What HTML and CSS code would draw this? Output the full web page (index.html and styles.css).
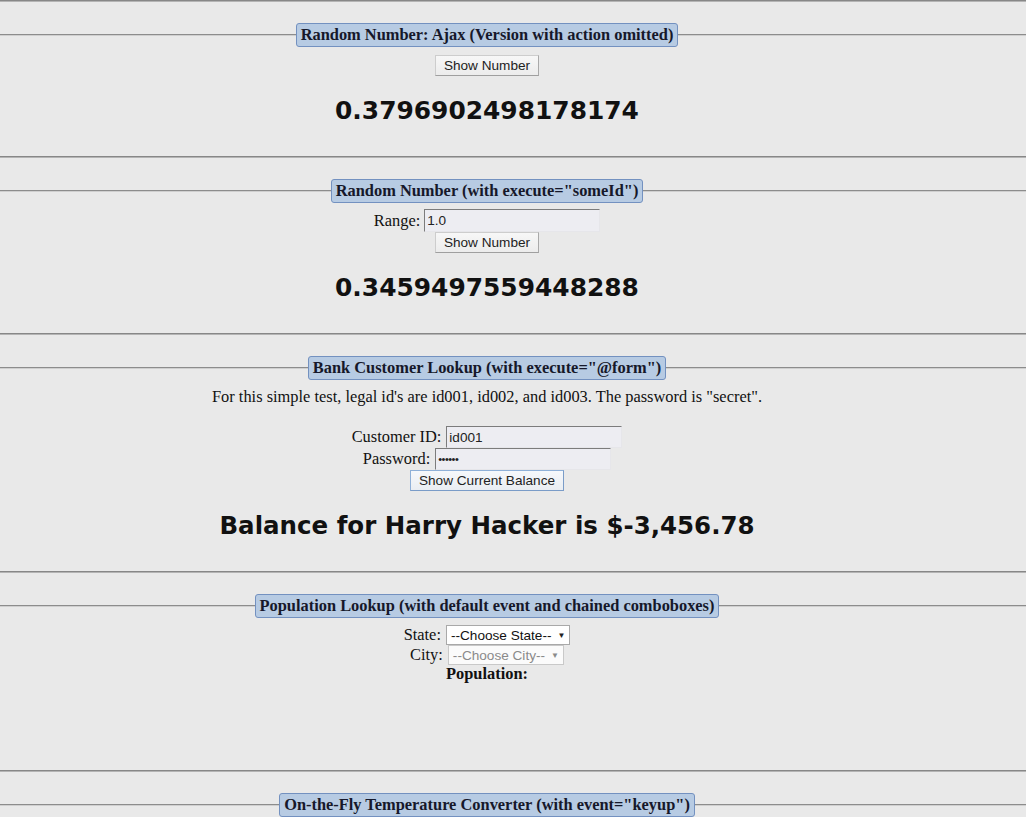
FILE: index.html
```html
<!DOCTYPE html>
<html>
<head>
<meta charset="utf-8">
<title>Ajax Examples</title>
<link rel="stylesheet" href="styles.css">
</head>
<body>
<div class="page">
  <hr class="sep first">
  <section class="block">
    <div class="legend-row"><span class="legend">Random Number: Ajax (Version with action omitted)</span></div>
    <div class="content">
      <button class="btn btn-top">Show Number</button>
      <h2 class="result">0.3796902498178174</h2>
    </div>
  </section>
  <hr class="sep">
  <section class="block">
    <div class="legend-row"><span class="legend">Random Number (with execute="someId")</span></div>
    <div class="content">
      <div class="row row-range"><span class="label">Range:</span><input class="text-input w176" type="text" value="1.0"></div>
      <button class="btn">Show Number</button>
      <h2 class="result">0.3459497559448288</h2>
    </div>
  </section>
  <hr class="sep">
  <section class="block">
    <div class="legend-row"><span class="legend">Bank Customer Lookup (with execute="@form")</span></div>
    <div class="content">
      <p class="note">For this simple test, legal id's are id001, id002, and id003. The password is "secret".</p>
      <div class="row row-cust"><span class="label">Customer ID:</span><input class="text-input w176" type="text" value="id001"></div>
      <div class="row row-pass"><span class="label">Password:</span><input class="text-input w176 pw" type="password" value="secret"></div>
      <button class="btn btn-focus">Show Current Balance</button>
      <h2 class="result balance">Balance for Harry Hacker is $-3,456.78</h2>
    </div>
  </section>
  <hr class="sep">
  <section class="block">
    <div class="legend-row"><span class="legend">Population Lookup (with default event and chained comboboxes)</span></div>
    <div class="content content-pop">
      <div class="row row-sel"><span class="label">State:</span><span class="combo"><span class="combo-text">--Choose State--</span><span class="arrow">▼</span></span></div>
      <div class="row row-sel"><span class="label">City:</span><span class="combo disabled"><span class="combo-text">--Choose City--</span><span class="arrow">▼</span></span></div>
      <div class="pop">Population: </div>
    </div>
  </section>
  <hr class="sep">
  <section class="block">
    <div class="legend-row"><span class="legend">On-the-Fly Temperature Converter (with event="keyup")</span></div>
  </section>
</div>
</body>
</html>
```

FILE: styles.css
```css
html {
  overflow-x: hidden;
}

body {
  margin: 0;
  background: #e9e9e9;
  font-family: "Liberation Serif", "Times New Roman", serif;
  font-size: 16.4px;
  color: #111;
  overflow-x: hidden;
}

.page {
  margin-left: -52px;
}

.sep {
  margin: 0;
  height: 0;
  border: 0;
  border-top: 1px solid #878787;
  border-bottom: 1px solid #b4b4b4;
}

.legend-row {
  display: flex;
  align-items: center;
  margin-top: 21px;
  height: 24px;
}

.legend-row::before,
.legend-row::after {
  content: "";
  flex: 1;
  border-top: 1px solid #8c8c8c;
  border-bottom: 1px solid #cfcfcf;
}

.legend {
  background: #b7cbe3;
  border: 1px solid #7391c0;
  border-radius: 3px;
  padding: 0 4px;
  font-weight: bold;
  font-size: 16.4px;
  line-height: 22px;
  color: #16182a;
  white-space: nowrap;
}

.content {
  display: flex;
  flex-direction: column;
  align-items: center;
}

.btn {
  font-family: "Liberation Sans", Arial, sans-serif;
  font-size: 13.6px;
  height: 21px;
  box-sizing: border-box;
  padding: 0 8px;
  background: linear-gradient(#f7f7f7, #ececec);
  border: 1px solid #cdcdcd;
  border-right-color: #a9a9a9;
  border-bottom-color: #9f9f9f;
  color: #222;
  margin: 0;
}

.btn-top {
  margin-top: 8px;
}

.btn-focus {
  border-color: #8fb0d8;
  border-right-color: #7a9cc8;
  border-bottom-color: #7a9cc8;
  background: linear-gradient(#f6f8fb, #e9edf2);
}

.result {
  margin: 20px 0 30px;
  font-family: "DejaVu Sans", Verdana, sans-serif;
  font-size: 24.9px;
  font-weight: bold;
  line-height: 30px;
  color: #111;
}

.result.balance {
  font-size: 24.5px;
}

.row {
  display: flex;
  align-items: center;
  justify-content: center;
  gap: 5px;
}

.row-range {
  margin-top: 6px;
  height: 23px;
  gap: 4px;
}

.row-cust {
  margin-top: 20px;
  height: 22px;
}

.row-pass {
  height: 22px;
}

.text-input {
  font-family: "Liberation Sans", Arial, sans-serif;
  font-size: 13.6px;
  height: 23px;
  box-sizing: border-box;
  padding: 0 2px;
  background: #ededf2;
  color: #222;
  border: 1px solid;
  border-color: #7c7c7c #e6e6ea #e6e6ea #7c7c7c;
  outline: none;
}

.row-cust .text-input,
.row-pass .text-input {
  height: 22px;
}

.w176 {
  width: 176px;
}

.pw {
  font-size: 11px;
  letter-spacing: -0.5px;
}

.note {
  margin: 8px 0 0;
  line-height: 18px;
}

.row-sel {
  height: 20px;
}

.row-sel:first-child {
  margin-top: 7px;
}

.combo {
  display: inline-flex;
  align-items: center;
  height: 20px;
  box-sizing: border-box;
  padding: 0 4px;
  background: #fff;
  border: 1px solid #a9a9a9;
  font-family: "Liberation Sans", Arial, sans-serif;
  font-size: 13.6px;
  color: #111;
  gap: 6px;
}

.combo .arrow {
  font-size: 8px;
  color: #222;
}

.combo.disabled {
  color: #8a8a8a;
  border-color: #c9c9c9;
  background: #fbfbfb;
}

.combo.disabled .arrow {
  color: #8a8a8a;
}

.pop {
  font-weight: bold;
  line-height: 18px;
  margin-bottom: 87px;
}
```
